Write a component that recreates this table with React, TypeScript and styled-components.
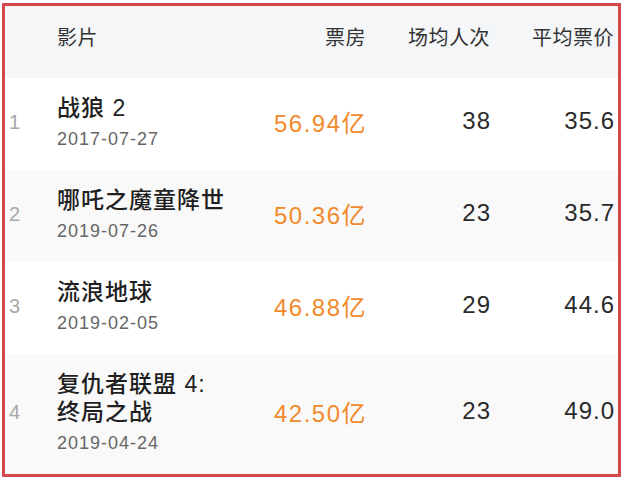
import styled, { createGlobalStyle } from "styled-components";

const GlobalStyle = createGlobalStyle`
  body {
    margin: 0;
    background: #ffffff;
    font-family: "Liberation Sans", "Noto Sans CJK SC", sans-serif;
  }
`;

const Page = styled.div`
  padding: 3px 5px 9px 2px;
`;

const Frame = styled.div`
  width: 619px;
  box-sizing: border-box;
  border: 3px solid #d4474a;
  background: #ffffff;
`;

const Row = styled.div<{ $shade?: boolean; $head?: boolean }>`
  display: grid;
  grid-template-columns: 52px 1fr 110px 124px 124px;
  align-items: center;
  padding-right: 4px;
  background-color: ${(p) => (p.$head ? "#f5f6f8" : p.$shade ? "#f9f9f9" : "#ffffff")};
  min-height: ${(p) => (p.$head ? "72px" : "auto")};
`;

const HeadCell = styled.span<{ $right?: boolean }>`
  font-family: "Noto Sans CJK SC", sans-serif;
  font-size: 20px;
  letter-spacing: 0.5px;
  color: #333333;
  text-align: ${(p) => (p.$right ? "right" : "left")};
  margin-top: -12px;
`;

const Rank = styled.span`
  font-size: 20px;
  color: #a8a8a8;
  padding-left: 4px;
  margin-top: -4px;
`;

const Film = styled.div`
  padding: 16px 0 17px;
`;

const Title = styled.div`
  font-size: 23px;
  font-weight: 500;
  line-height: 28px;
  letter-spacing: 1px;
  color: #1f1f1f;
  white-space: pre-line;
  margin-bottom: 3px;
`;

const Date = styled.div`
  font-size: 18px;
  line-height: 28px;
  letter-spacing: 1px;
  color: #666666;
`;

const Num = styled.span<{ $accent?: boolean }>`
  font-size: 24px;
  letter-spacing: ${(p) => (p.$accent ? "1.5px" : "1px")};
  color: ${(p) => (p.$accent ? "#f08a2c" : "#2a2a2a")};
  text-align: right;
  margin-right: -1px;
  margin-top: -6px;
`;

const films = [
  { rank: 1, name: "战狼 2", date: "2017-07-27", box: "56.94亿", avg: "38", price: "35.6" },
  { rank: 2, name: "哪吒之魔童降世", date: "2019-07-26", box: "50.36亿", avg: "23", price: "35.7" },
  { rank: 3, name: "流浪地球", date: "2019-02-05", box: "46.88亿", avg: "29", price: "44.6" },
  { rank: 4, name: "复仇者联盟 4:\n终局之战", date: "2019-04-24", box: "42.50亿", avg: "23", price: "49.0" },
];

export default function App() {
  return (
    <>
      <GlobalStyle />
      <Page>
        <Frame>
          <Row $head>
            <span />
            <HeadCell>影片</HeadCell>
            <HeadCell $right>票房</HeadCell>
            <HeadCell $right>场均人次</HeadCell>
            <HeadCell $right>平均票价</HeadCell>
          </Row>
          {films.map((f) => (
            <Row key={f.rank} $shade={f.rank % 2 === 0}>
              <Rank>{f.rank}</Rank>
              <Film>
                <Title>{f.name}</Title>
                <Date>{f.date}</Date>
              </Film>
              <Num $accent>{f.box}</Num>
              <Num>{f.avg}</Num>
              <Num>{f.price}</Num>
            </Row>
          ))}
        </Frame>
      </Page>
    </>
  );
}
